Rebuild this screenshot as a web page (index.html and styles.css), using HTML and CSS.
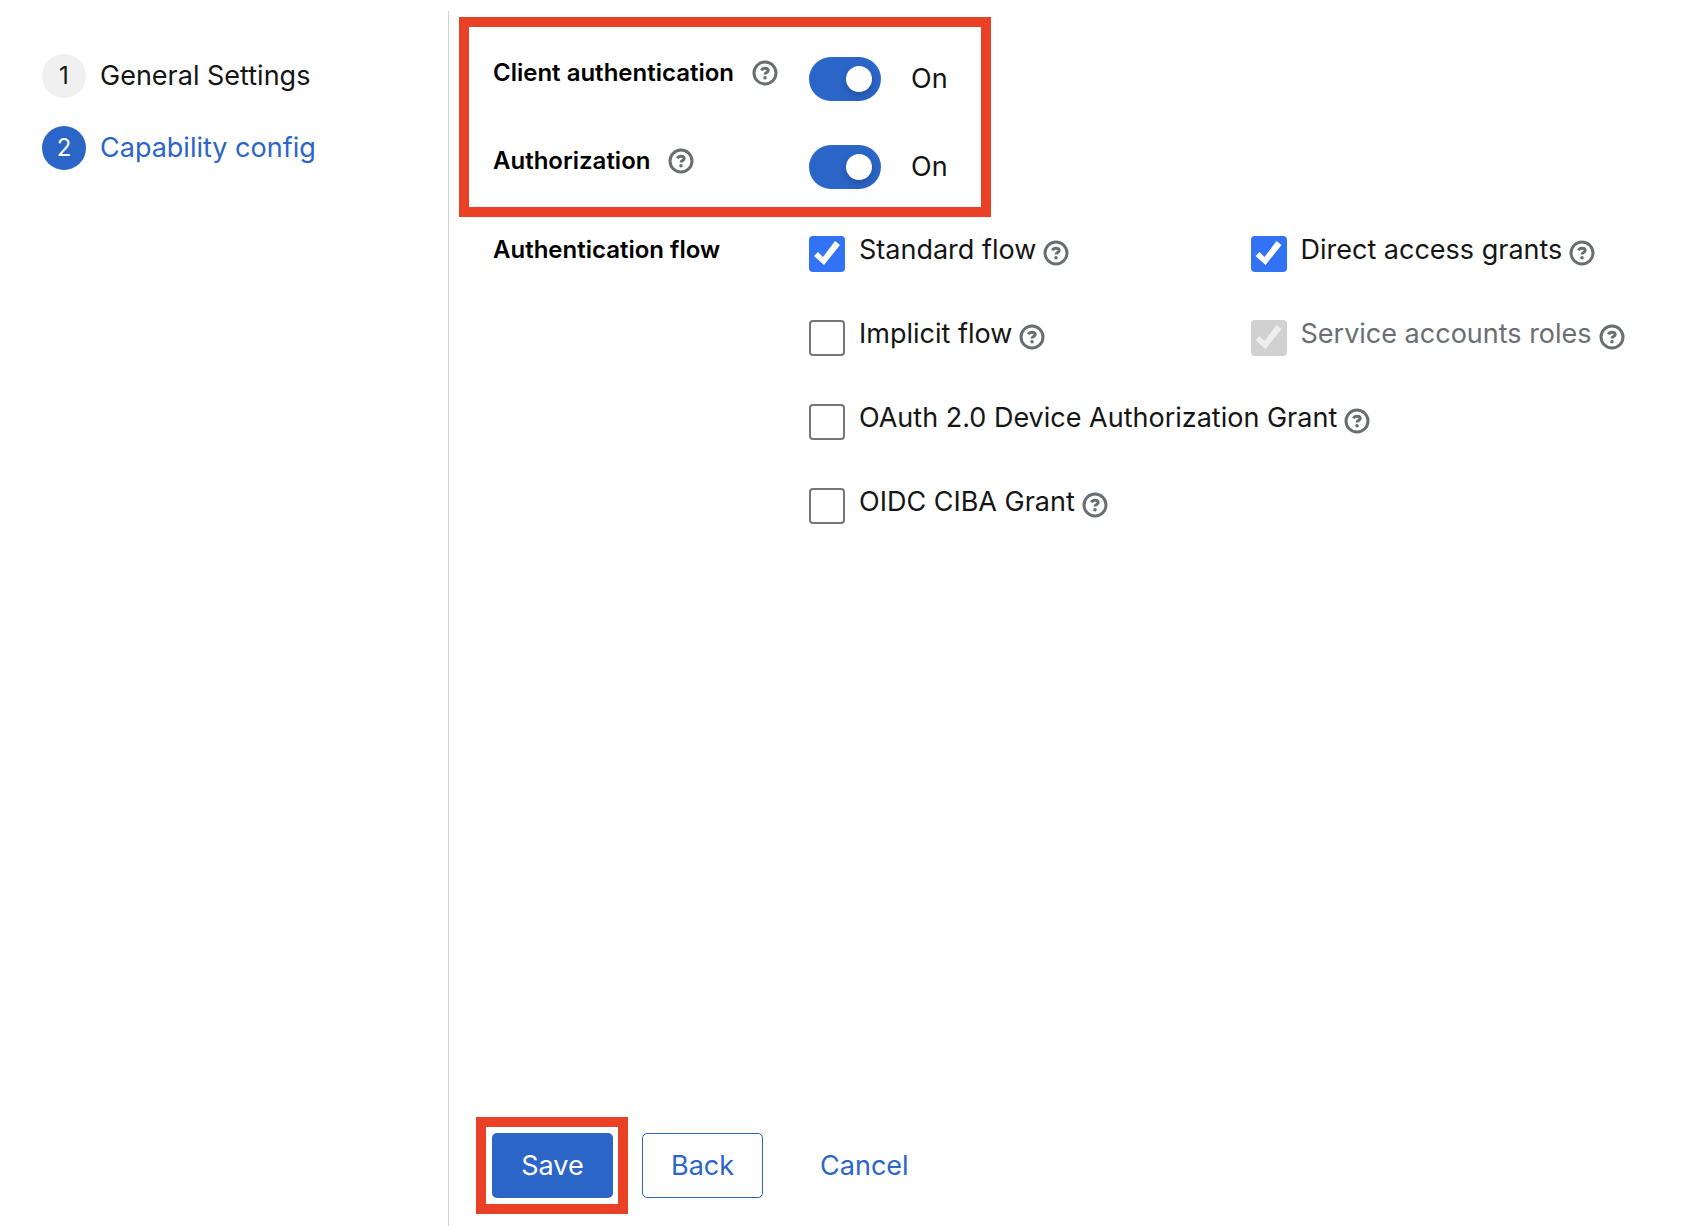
FILE: index.html
```html
<!DOCTYPE html>
<html lang="en">
<head>
<meta charset="utf-8">
<meta name="viewport" content="width=device-width, initial-scale=1">
<title>Create client</title>
<link rel="stylesheet" href="styles.css">
</head>
<body>
<svg class="sprite" aria-hidden="true">
  <symbol id="help" viewBox="0 0 26 26">
    <circle cx="13" cy="13" r="11" fill="none" stroke="currentColor" stroke-width="3"/>
    <path d="M9.4 10.4c.7-1.5 1.9-2.2 3.6-2.2 1.9 0 3.2.9 3.2 2.4 0 2-3.2 2-3.2 4" fill="none" stroke="currentColor" stroke-width="3"/>
    <circle cx="13" cy="17.8" r="1.8" fill="currentColor"/>
  </symbol>
</svg>
<div class="wizard">
  <nav class="wizard-nav" aria-label="Wizard steps">
    <ol class="steps">
      <li><a class="step" href="#general"><span class="step-number">1</span>General Settings</a></li>
      <li><a class="step step-current" href="#capability" aria-current="step"><span class="step-number">2</span>Capability config</a></li>
    </ol>
  </nav>
  <main class="wizard-main">
    <form class="form">
      <div class="highlight switches">
        <div class="row">
          <div class="label"><label for="client-auth">Client authentication</label><button class="help" type="button" aria-label="Help for client authentication"><svg><use href="#help"/></svg></button></div>
          <div class="control"><input class="switch" type="checkbox" role="switch" id="client-auth" checked><span>On</span></div>
        </div>
        <div class="row">
          <div class="label"><label for="authorization">Authorization</label><button class="help" type="button" aria-label="Help for authorization"><svg><use href="#help"/></svg></button></div>
          <div class="control"><input class="switch" type="checkbox" role="switch" id="authorization" checked><span>On</span></div>
        </div>
      </div>
      <div class="row flow" role="group" aria-labelledby="flow-label">
        <div class="label" id="flow-label">Authentication flow</div>
        <div class="options">
          <div class="option"><input class="check" type="checkbox" id="standard" checked><label for="standard">Standard flow</label><button class="help" type="button" aria-label="Help for standard flow"><svg><use href="#help"/></svg></button></div>
          <div class="option"><input class="check" type="checkbox" id="direct" checked><label for="direct">Direct access grants</label><button class="help" type="button" aria-label="Help for direct access grants"><svg><use href="#help"/></svg></button></div>
          <div class="option"><input class="check" type="checkbox" id="implicit"><label for="implicit">Implicit flow</label><button class="help" type="button" aria-label="Help for implicit flow"><svg><use href="#help"/></svg></button></div>
          <div class="option"><input class="check" type="checkbox" id="service" checked disabled><label for="service">Service accounts roles</label><button class="help" type="button" aria-label="Help for service accounts roles"><svg><use href="#help"/></svg></button></div>
          <div class="option option-wide"><input class="check" type="checkbox" id="device"><label for="device">OAuth 2.0 Device Authorization Grant</label><button class="help" type="button" aria-label="Help for device authorization grant"><svg><use href="#help"/></svg></button></div>
          <div class="option option-wide"><input class="check" type="checkbox" id="ciba"><label for="ciba">OIDC CIBA Grant</label><button class="help" type="button" aria-label="Help for CIBA grant"><svg><use href="#help"/></svg></button></div>
        </div>
      </div>
      <footer class="actions">
        <div class="highlight save"><button class="button button-primary" type="submit">Save</button></div>
        <button class="button button-secondary" type="button">Back</button>
        <button class="button button-link" type="button">Cancel</button>
      </footer>
    </form>
  </main>
</div>
</body>
</html>
```
FILE: styles.css
```css
* { box-sizing: border-box; }

body {
  margin: 0;
  background: #fff;
  color: #151515;
  font: 27px/32px Inter, "Liberation Sans", sans-serif;
}

button { font: inherit; cursor: pointer; }

.sprite { display: none; }

.wizard {
  display: flex;
  min-height: 100vh;
  padding-top: 11px;
}

.wizard-nav {
  flex: 0 0 448px;
  padding: 43px 24px 0 42px;
}

.steps {
  display: grid;
  gap: 28px;
  margin: 0;
  padding: 0;
  list-style: none;
}

.step {
  display: flex;
  align-items: center;
  gap: 14px;
  color: #151515;
  text-decoration: none;
}

.step-number {
  display: grid;
  place-items: center;
  width: 44px;
  height: 44px;
  border-radius: 50%;
  background: #f0f0f0;
  font-size: 24px;
}

.step-current { color: #2b65c7; }
.step-current .step-number { background: #2b65c7; color: #fff; }

.wizard-main {
  display: flex;
  flex: 1;
  min-width: 0;
  border-left: 1px solid #d2d2d2;
}

.form {
  display: flex;
  flex: 1;
  flex-direction: column;
  padding: 6px 0 12px 10px;
}

.highlight { border: 10px solid #ea4025; }

.switches {
  display: grid;
  gap: 44px;
  align-self: flex-start;
  padding: 30px 33px 18px 24px;
}

.row {
  display: flex;
  align-items: flex-start;
}

.label {
  display: flex;
  flex: 0 0 316px;
  align-items: center;
  gap: 18px;
  color: #000;
  font-size: 24px;
  font-weight: 600;
}

.help {
  display: block;
  width: 26px;
  height: 26px;
  padding: 0;
  border: 0;
  background: none;
  color: #6a6e73;
}

.help svg { display: block; width: 26px; height: 26px; }

.control {
  display: flex;
  align-items: center;
  gap: 30px;
}

.switch {
  flex: none;
  appearance: none;
  width: 72px;
  height: 44px;
  margin: 0;
  padding: 9px;
  border-radius: 22px;
  background: #8a8d90;
}

.switch::before {
  content: "";
  display: block;
  width: 26px;
  height: 26px;
  border-radius: 50%;
  background: #fff;
  box-shadow: 0 4px 8px rgba(0, 0, 0, 0.2);
}

.switch:checked { background: #2b65c7; }
.switch:checked::before { margin-left: auto; }

.flow { padding: 17px 0 48px 34px; }

.options {
  display: grid;
  flex: 1;
  grid-template-columns: 1fr 1fr;
  gap: 46px 4px;
}

.option {
  display: flex;
  align-items: flex-start;
  height: 38px;
}

.option-wide { grid-column: 1 / -1; }

.option label { margin: 0 7px 0 14px; white-space: nowrap; }
.option .help { margin-top: 6px; }

.check {
  flex: none;
  appearance: none;
  width: 36px;
  height: 36px;
  margin: 2px 0 0;
  border: 2px solid #767676;
  border-radius: 4px;
  background: #fff;
}

.check:checked { border: 0; background: #3273f6; }

.check:checked::before {
  content: "";
  display: block;
  width: 36px;
  height: 36px;
  background: #fff;
  clip-path: polygon(5px 20px, 9px 16px, 14px 21px, 26px 5px, 31px 9px, 15px 29px);
}

.check:disabled { background: #d1d1d1; }
.check:disabled::before { background: #eee; }
.check:disabled + label { color: #6a6e73; }

.actions {
  display: flex;
  align-items: center;
  gap: 14px;
  margin-top: auto;
  padding-left: 17px;
}

.save { padding: 6px 5px 6px 6px; }

.button {
  display: block;
  min-width: 121px;
  height: 65px;
  padding: 0 28px;
  border: 1px solid transparent;
  border-radius: 5px;
  background: none;
  color: #2b65c7;
}

.button-primary { background: #2b65c7; color: #fff; }
.button-secondary { border-color: #2b65c7; }
.button-link { margin-left: 14px; }
```
